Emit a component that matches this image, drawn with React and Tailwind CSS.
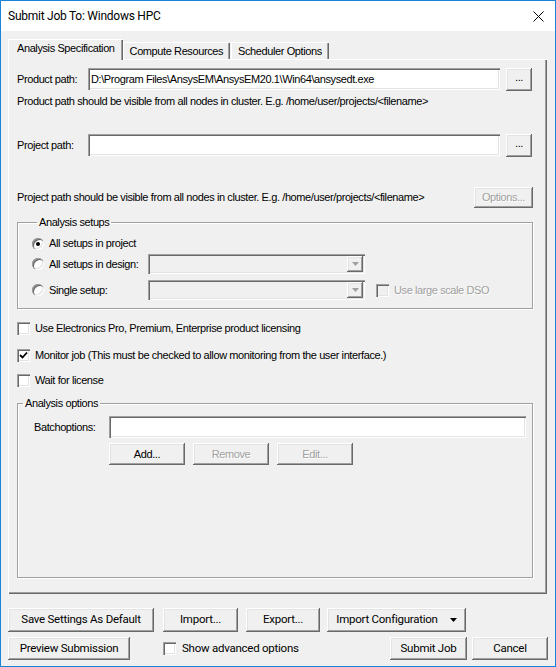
import React from 'react';

const raised = 'bg-[#f0f0f0] shadow-[inset_-1px_-1px_#696969,inset_1px_1px_#ffffff,inset_-2px_-2px_#a0a0a0,inset_2px_2px_#e3e3e3]';
const sunken = 'shadow-[inset_1px_1px_#a0a0a0,inset_2px_2px_#696969,inset_-1px_-1px_#ffffff,inset_-2px_-2px_#e3e3e3]';
const disabledText = 'text-[#a0a0a0] [text-shadow:1px_1px_#ffffff]';
const uiFont = "font-['Roboto',sans-serif] text-[11.5px] tracking-[-0.25px]";

const Btn = ({ children, className = '', disabled }) => (
  <div className={`flex items-center justify-center whitespace-nowrap ${raised} ${disabled ? disabledText : 'text-black'} ${className}`}>
    {children}
  </div>
);

const Field = ({ children, className = '' }) => (
  <div className={`flex items-center bg-white pl-[3px] ${sunken} ${className}`}>{children}</div>
);

const CheckBox = ({ checked, disabled }) => (
  <div className={`w-[13px] h-[13px] shrink-0 flex items-center justify-center ${disabled ? 'bg-[#f0f0f0]' : 'bg-white'} ${sunken}`}>
    {checked && (
      <svg width="9" height="9" viewBox="0 0 9 9">
        <path d="M1 4 L3.5 6.5 L8 1.5" stroke="#000" strokeWidth="1.8" fill="none" />
      </svg>
    )}
  </div>
);

const Radio = ({ checked }) => (
  <div className="w-[12px] h-[12px] shrink-0 rounded-full bg-white flex items-center justify-center shadow-[inset_1px_1px_#a0a0a0,inset_2px_2px_#696969,inset_-1px_-1px_#ffffff,inset_-2px_-2px_#e3e3e3]">
    {checked && <div className="w-[4px] h-[4px] rounded-full bg-black" />}
  </div>
);

const Combo = () => (
  <div className={`w-[217px] h-[20px] flex items-stretch justify-end bg-[#f0f0f0] p-[2px] ${sunken}`}>
    <div className={`w-[16px] flex items-center justify-center ${raised}`}>
      <svg width="7" height="4" viewBox="0 0 7 4"><path d="M0 0 H7 L3.5 4 Z" fill="#a0a0a0" /></svg>
    </div>
  </div>
);

const Group = ({ title, className = '', children }) => (
  <fieldset className={`border border-[#a0a0a0] shadow-[1px_1px_#ffffff,inset_1px_1px_#ffffff] ${className}`}>
    <legend className="ml-[5px] px-[2px] leading-[13px]">{title}</legend>
    {children}
  </fieldset>
);

const tabEdge = 'shadow-[inset_1px_1px_#ffffff,inset_-1px_0_#696969,inset_-2px_0_#a0a0a0]';

const App = () => {
  return (
    <div className="w-[556px] h-[667px] border border-[#1883d7] bg-[#f0f0f0] flex flex-col font-['Liberation_Sans',Arial,sans-serif] text-[11px] tracking-[-0.4px] text-black">
      {/* title bar */}
      <div className={`h-[30px] bg-white flex items-center justify-between pl-[7px] pr-[11px] ${uiFont} text-[12px]`}>
        <span>Submit Job To: Windows HPC</span>
        <svg width="11" height="11" viewBox="0 0 11 11"><path d="M0.5 0.5 L10.5 10.5 M10.5 0.5 L0.5 10.5" stroke="#000" strokeWidth="1" /></svg>
      </div>

      <div className="flex-1 pl-[7px] pt-[8px]">
        {/* tabs */}
        <div className="flex items-end h-[20px] leading-[13px] whitespace-nowrap">
          <div className={`relative z-10 h-[21px] -mb-[1px] pl-[9px] pr-[8px] pt-[3px] bg-[#f0f0f0] ${tabEdge}`}>
            Analysis Specification
          </div>
          <div className={`h-[17px] px-[7px] pt-[3px] ${tabEdge}`}>
            Compute Resources
          </div>
          <div className={`h-[17px] px-[7px] pt-[3px] ml-[1px] ${tabEdge}`}>
            Scheduler Options
          </div>
        </div>

        {/* tab panel */}
        <div className="w-[539px] h-[535px] pl-[9px] pt-[9px] shadow-[inset_1px_1px_#ffffff,inset_-1px_-1px_#696969,inset_-2px_-2px_#a0a0a0] leading-[13px]">
          <div className="flex items-center h-[22px]">
            <span className="w-[71px]">Product path:</span>
            <Field className="w-[412px] h-[22px]">D:\Program Files\AnsysEM\AnsysEM20.1\Win64\ansysedt.exe</Field>
            <Btn className="ml-[6px] w-[26px] h-[23px] pb-[3px]">...</Btn>
          </div>
          <div className="mt-[5px]">Product path should be visible from all nodes in cluster. E.g. /home/user/projects/&lt;filename&gt;</div>

          <div className="flex items-center h-[22px] mt-[26px]">
            <span className="w-[71px]">Project path:</span>
            <Field className="w-[412px] h-[22px]" />
            <Btn className="ml-[6px] w-[26px] h-[23px] pb-[3px]">...</Btn>
          </div>

          <div className="flex items-center justify-between w-[516px] h-[21px] mt-[31px]">
            <span>Project path should be visible from all nodes in cluster. E.g. /home/user/projects/&lt;filename&gt;</span>
            <Btn disabled className="w-[59px] h-[21px]">Options...</Btn>
          </div>

          <Group title="Analysis setups" className="w-[516px] mt-[8px] h-[93px] pl-[14px]">
            <div className="flex items-center h-[13px] mt-[8px]">
              <Radio checked />
              <span className="ml-[5px]">All setups in project</span>
            </div>
            <div className="flex items-center h-[20px] mt-[4px]">
              <div className="flex items-center w-[116px]">
                <Radio />
                <span className="ml-[5px]">All setups in design:</span>
              </div>
              <Combo />
            </div>
            <div className="flex items-center h-[20px] mt-[6px]">
              <div className="flex items-center w-[116px]">
                <Radio />
                <span className="ml-[5px]">Single setup:</span>
              </div>
              <Combo />
              <div className="flex items-center ml-[11px]">
                <CheckBox disabled />
                <span className={`ml-[5px] ${disabledText}`}>Use large scale DSO</span>
              </div>
            </div>
          </Group>

          <div className="flex items-center h-[13px] mt-[13px]">
            <CheckBox />
            <span className="ml-[5px]">Use Electronics Pro, Premium, Enterprise product licensing</span>
          </div>
          <div className="flex items-center h-[13px] mt-[14px]">
            <CheckBox checked />
            <span className="ml-[5px]">Monitor job (This must be checked to allow monitoring from the user interface.)</span>
          </div>
          <div className="flex items-center h-[13px] mt-[12px]">
            <CheckBox />
            <span className="ml-[5px]">Wait for license</span>
          </div>

          <Group title="Analysis options" className="w-[516px] mt-[10px] h-[181px]">
            <div className="flex items-center h-[22px] mt-[6px]">
              <span className="w-[91px] pl-[16px]">Batchoptions:</span>
              <Field className="w-[417px] h-[22px]" />
            </div>
            <div className="flex h-[22px] mt-[5px] ml-[91px] gap-[8px]">
              <Btn className="w-[76px] h-[22px]">Add...</Btn>
              <Btn disabled className="w-[76px] h-[22px]">Remove</Btn>
              <Btn disabled className="w-[76px] h-[22px]">Edit...</Btn>
            </div>
          </Group>
        </div>

        {/* bottom buttons */}
        <div className={uiFont}>
          <div className="flex h-[24px] mt-[14px]">
            <Btn className="w-[146px] h-[24px] shadow-[inset_-1px_-1px_#000000,inset_1px_1px_#ffffff,inset_-2px_-2px_#696969,inset_2px_2px_#e3e3e3,inset_-3px_-3px_#a0a0a0]">Save Settings As Default</Btn>
            <Btn className="w-[75px] h-[24px] ml-[9px]">Import...</Btn>
            <Btn className="w-[74px] h-[24px] ml-[8px]">Export...</Btn>
            <Btn className="w-[139px] h-[24px] ml-[7px]">
              <span>Import Configuration</span>
              <svg className="ml-[12px]" width="7" height="4" viewBox="0 0 7 4"><path d="M0 0 H7 L3.5 4 Z" fill="#000" /></svg>
            </Btn>
          </div>
          <div className="flex items-center h-[23px] mt-[5px]">
            <Btn className="w-[122px] h-[23px]">Preview Submission</Btn>
            <div className="flex items-center ml-[33px]">
              <CheckBox />
              <span className="ml-[6px]">Show advanced options</span>
            </div>
            <Btn className="w-[77px] h-[23px] ml-auto">Submit Job</Btn>
            <Btn className="w-[76px] h-[23px] ml-[5px] mr-[7px]">Cancel</Btn>
          </div>
        </div>
      </div>
    </div>
  );
};

export default App;
